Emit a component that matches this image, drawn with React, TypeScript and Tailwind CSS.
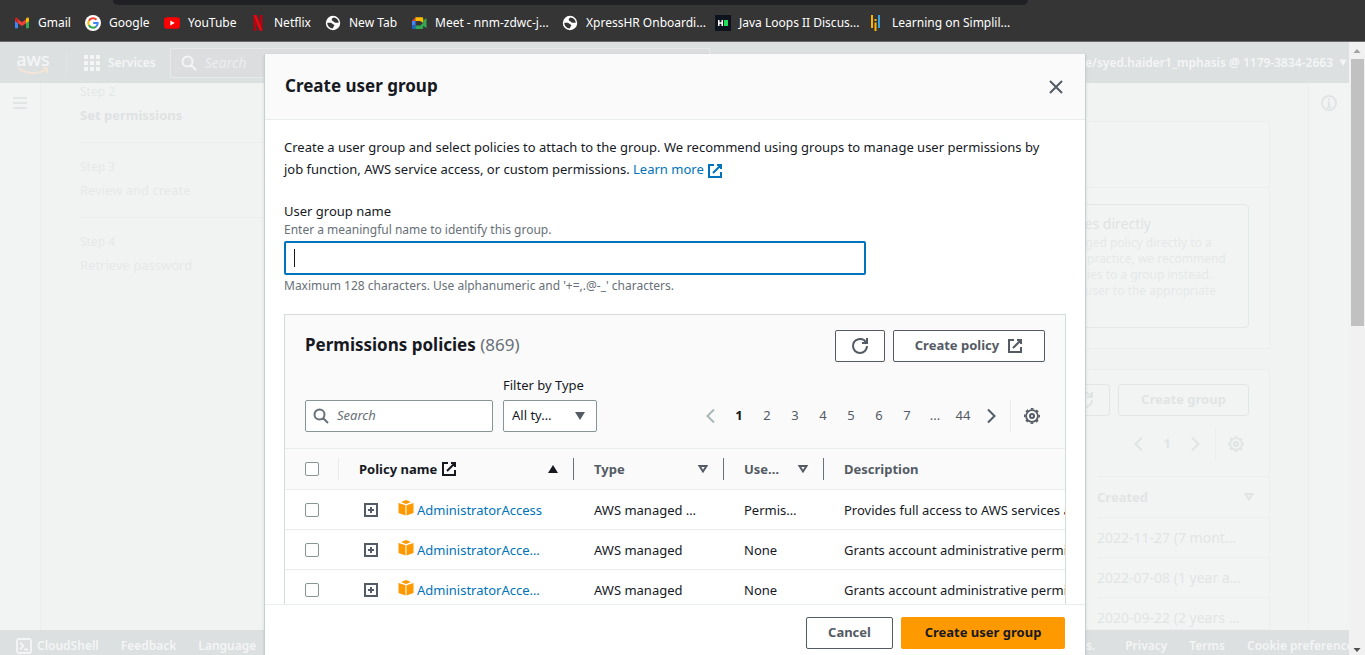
import type { ReactNode } from "react";

function Stroke({ d, className = "size-4", width = 2 }: { d: string; className?: string; width?: number }) {
  return (
    <svg viewBox="0 0 16 16" className={`shrink-0 ${className}`} fill="none" stroke="currentColor" strokeWidth={width} aria-hidden="true">
      <path d={d} />
    </svg>
  );
}

const EXTERNAL = "M10 2h4v4M6 10l8-8M14 9v5H2V2h5";
const REFRESH = "M10 5h5V0M15 8a7 7 0 0 1-14 0 7 7 0 0 1 13.3-3";
const LEFT = "M11 1.5L4.5 8l6.500 6.500";
const RIGHT = "M5 1.500L11.500 8 5 14.500";
const CLOSE = "M2 2l12 12M14 2L2 14";

function SearchIcon() {
  return <Stroke d="M11.500 6.500a5 5 0 1 1-10 0 5 5 0 0 1 10 0zM15 15l-5-5" />;
}

function Gear() {
  return (
    <svg viewBox="0 0 16 16" className="size-4 shrink-0" fill="none" stroke="currentColor" strokeWidth="2" aria-hidden="true">
      <circle cx="8" cy="8" r="5.900" strokeWidth="1.800" />
      <circle cx="8" cy="8" r="7.200" strokeWidth="1.600" strokeDasharray="2.800 2.850" strokeDashoffset="1.400" />
      <circle cx="8" cy="8" r="2" />
    </svg>
  );
}

function DownOutline() {
  return (
    <svg viewBox="0 0 16 16" className="size-4 shrink-0" fill="none" stroke="currentColor" strokeWidth="2" aria-hidden="true">
      <path d="M4.500 5h7L8 10.500z" />
    </svg>
  );
}

function Cube() {
  return (
    <svg viewBox="0 0 16 16" className="size-4 shrink-0" fill="#ff9900" aria-hidden="true">
      <path d="M8 0l5 2-5 2-5-2zM.5 3l7 2.300V15.500l-7-2.500zM15.500 3l-7 2.300V15.500l7-2.500z" />
    </svg>
  );
}

const gmail = (
  <svg viewBox="0 0 16 16" className="size-4">
    <path d="M1 4v9.200h3V7.500z" fill="#4285f4" />
    <path d="M15 4v9.200h-3V7.500z" fill="#34a853" />
    <path d="M4 4.300v4L8 11l4-2.700v-4L8 7.300z" fill="#ea4335" />
    <path d="M1 4c0-1.500 1.500-1.700 2.400-1L4 3.600v4.600L1 6z" fill="#c5221f" />
    <path d="M15 4c0-1.500-1.500-1.700-2.400-1l-.6.6v4.600L15 6z" fill="#fbbc04" />
  </svg>
);
const google = (
  <svg viewBox="0 0 16 16" className="size-4" fill="none" strokeWidth="2">
    <circle cx="8" cy="8" r="8" fill="#fff" />
    <path d="M11.500 4.700A4.700 4.700 0 0 0 3.900 5.800" stroke="#ea4335" />
    <path d="M3.900 5.700a4.700 4.700 0 0 0 0 4.700" stroke="#fbbc04" />
    <path d="M3.900 10.200a4.700 4.700 0 0 0 7.100 1.400" stroke="#34a853" />
    <path d="M8.200 8h4.500a4.700 4.700 0 0 1-1.700 3.700" stroke="#4285f4" />
  </svg>
);
const youtube = (
  <svg viewBox="0 0 16 16" className="size-4">
    <rect y="2.300" width="16" height="11.500" rx="3" fill="#f00" />
    <path d="M6.300 5.500v5L10.700 8z" fill="#fff" />
  </svg>
);
const netflix = (
  <svg viewBox="0 0 16 16" className="size-4">
    <path d="M3.500 0h3v15.500l-3 .5zM9.500 0h3v16l-3-.5z" fill="#b1060f" />
    <path d="M3.500 0h3l6 16-3-.5z" fill="#e50914" />
  </svg>
);
const globe = (
  <svg viewBox="0 0 16 16" className="size-4">
    <circle cx="8" cy="8" r="7.200" fill="#fff" />
    <path d="M2.300 7.700h3.200c1.700 0 1.500 1.500 3 1.700 1.200.2 1 1.500.2 2.200l-1 1.800C5 13.300 2.300 11 2.300 7.700z" fill="#353535" />
    <path d="M8.500 2.400c-2 .8-2.500 2.800-.8 3.500 1.300.5 1.500 1.800 3 1.800h3C13.700 5 11.500 2.500 8.500 2.400z" fill="#353535" />
  </svg>
);
const meet = (
  <svg viewBox="0 0 16 16" className="size-4">
    <path d="M1 6l3.500-3.700V6z" fill="#ea4335" />
    <path d="M4.500 2.300H11c.8 0 1.200.5 1.200 1.200V8l-3-2H4.500z" fill="#fbbc04" />
    <path d="M1 6h3.500v4.500H1z" fill="#4285f4" />
    <path d="M1 10.500h3.500V14H2.200C1.400 14 1 13.500 1 12.800z" fill="#1967d2" />
    <path d="M4.500 10.500h4.700L12.200 8v4.800c0 .7-.4 1.200-1.200 1.200H4.500zM12.200 5.500L15.500 3v10.300l-3.300-2.600z" fill="#34a853" />
  </svg>
);
const hackerrank = (
  <svg viewBox="0 0 16 16" className="size-4">
    <path d="M0 0h16v16H0z" fill="#0e141e" />
    <path d="M3 5h1.500v2.200h2V5H8v6H6.500V8.800h-2V11H3z" fill="#fff" />
    <path d="M9 5h4v6H9z" fill="#1ee05a" />
  </svg>
);
const simplilearn = (
  <svg viewBox="0 0 16 16" className="size-4">
    <path d="M3 0h2v13H3zM6.500 4h2v2h-2zM6.500 7.500h2V16h-2z" fill="#fdb300" />
    <path d="M10 0h2v13h-2z" fill="#38a4dd" />
  </svg>
);

const bookmarks: { icon: ReactNode; label: string; width: string }[] = [
  { icon: gmail, label: "Gmail", width: "w-[71px]" },
  { icon: google, label: "Google", width: "w-[79px]" },
  { icon: youtube, label: "YouTube", width: "w-[86px]" },
  { icon: netflix, label: "Netflix", width: "w-[75px]" },
  { icon: globe, label: "New Tab", width: "w-[86px]" },
  { icon: meet, label: "Meet - nnm-zdwc-j...", width: "w-[151px]" },
  { icon: globe, label: "XpressHR Onboardi...", width: "w-[153px]" },
  { icon: hackerrank, label: "Java Loops II Discus...", width: "w-[153px]" },
  { icon: simplilearn, label: "Learning on Simplil...", width: "w-[153px]" },
];

function BookmarkBar() {
  return (
    <header className="flex h-[42px] shrink-0 flex-col border-b border-[#6a6a6a] bg-[#353535]">
      <div className="mr-[337px] ml-[113px] h-[5px] rounded-b-lg bg-[#202124]" />
      <nav className="flex flex-1 items-center pl-[14px] text-xs text-white" aria-label="Bookmarks">
        {bookmarks.map((b) => (
          <a key={b.label} href="#" className={`flex shrink-0 items-center gap-2 whitespace-nowrap ${b.width}`}>
            {b.icon}
            {b.label}
          </a>
        ))}
      </nav>
    </header>
  );
}

function ConsoleHeader() {
  return (
    <header className="flex h-[41px] shrink-0 items-center bg-[#dce0e1] text-xs font-semibold text-[#f4f5f5]">
      <a href="#" className="flex w-[67px] flex-col items-center border-r border-[#e1e4e5] text-lg leading-4 font-medium">
        aws
        <svg viewBox="0 0 32 8" className="h-2 w-8" fill="none" stroke="#f3e6d6" strokeWidth="2">
          <path d="M1 1c9 6.500 20 6.500 28 1.500M25.500 1.200c5-1 5.500 0 4 5" />
        </svg>
      </a>
      <button className="ml-[17px] flex items-center gap-2">
        <svg viewBox="0 0 16 16" className="size-4" fill="currentColor">
          <path d="M0 0h4v4H0zM6 0h4v4H6zM12 0h4v4h-4zM0 6h4v4H0zM6 6h4v4H6zM12 6h4v4h-4zM0 12h4v4H0zM6 12h4v4H6zM12 12h4v4h-4z" />
        </svg>
        Services
      </button>
      <div className="ml-[14px] flex h-[30px] w-[540px] items-center gap-2 border border-[#e7eaea] bg-[#dcdddf] pl-[10px]">
        <SearchIcon />
        <input aria-label="Search services" placeholder="Search" className="min-w-0 flex-1 text-sm font-normal italic placeholder:text-[#eceeee]" />
      </div>
      <button className="ml-auto flex items-center gap-1 whitespace-nowrap">
        Role/syed.haider1_mphasis @ 1179-3834-2663
        <svg viewBox="0 0 12 12" className="size-3" fill="currentColor">
          <path d="M2.500 2.500h7L6 9z" />
        </svg>
      </button>
    </header>
  );
}

const steps = [
  { step: "Step 2", title: "Set permissions", style: "font-bold text-[#dfe2e2]" },
  { step: "Step 3", title: "Review and create", style: "text-[#e5e8e8]" },
  { step: "Step 4", title: "Retrieve password", style: "text-[#e5e8e8]" },
];

const createdDates = ["2022-11-27 (7 mont…", "2022-07-08 (1 year a…", "2020-09-22 (2 years …"];

function ConsolePage() {
  return (
    <div className="flex min-w-0 flex-1 flex-col overflow-hidden bg-[#f2f4f4]">
      <ConsoleHeader />
      <div className="flex min-h-0 flex-1 overflow-hidden">
        <aside className="flex w-[41px] shrink-0 justify-center border-r border-[#eceeee] pt-3 text-[#e2e5e5]">
          <button aria-label="Open navigation" className="h-4">
            <Stroke d="M1 3h14M1 8h14M1 13h14" />
          </button>
        </aside>
        <main className="flex min-w-0 flex-1 gap-10 bg-[#f1f3f3] pr-[38px] pl-[39px]">
          <ol className="flex w-[222px] shrink-0 flex-col">
            {steps.map((s) => (
              <li key={s.step} className="mb-[15px] flex h-[60px] flex-col border-b border-[#eceeee] last:border-0">
                <span className="text-xs leading-[18px] text-[#e5e8e8]">{s.step}</span>
                <span className={`pt-[3px] text-[13px] leading-[22px] ${s.style}`}>{s.title}</span>
              </li>
            ))}
          </ol>
          <div className="flex min-w-0 flex-1 flex-col pt-[38px]">
            <section className="shrink-0 border border-[#eceeee] bg-[#f2f4f4]">
              <div className="h-[66px] border-b border-[#eceeee]" />
              <div className="flex justify-end px-5 pt-4 pb-5">
                <div className="h-[124px] w-[278px] rounded-sm border border-[#e5e8e8] pt-2 pl-8 whitespace-nowrap">
                  <h3 className="text-sm leading-[22px] text-[#dfe2e2]">Attach policies directly</h3>
                  <p className="text-xs leading-4 text-[#e5e8e8]">
                    Attach a managed policy directly to a<br />
                    user. As a best practice, we recommend<br />
                    attaching policies to a group instead.<br />
                    Then, add the user to the appropriate<br />
                    group.
                  </p>
                </div>
              </div>
            </section>
            <section className="mt-5 flex-1 overflow-hidden border border-[#eceeee] bg-[#f2f4f4] text-[#e1e4e4]">
              <div className="flex justify-end gap-2 pt-[14px] pr-5">
                <button aria-label="Refresh groups" className="flex h-8 w-[50px] items-center justify-center rounded-sm border border-[#e2e5e5]">
                  <Stroke d={REFRESH} />
                </button>
                <button className="h-8 w-[131px] rounded-sm border border-[#e2e5e5] text-[13px] font-bold">Create group</button>
              </div>
              <div className="mt-3 flex h-8 items-center justify-end gap-3 pr-[25px]">
                <Stroke d={LEFT} />
                <span className="w-4 text-center text-[13px] font-bold">1</span>
                <Stroke d={RIGHT} />
                <span className="h-8 border-r border-[#eceeee]" />
                <Gear />
              </div>
              <table className="mt-4 ml-auto w-[172px] text-left text-sm">
                <thead>
                  <tr className="h-[41px] border-y border-[#eceeee] text-[13px]">
                    <th>
                      <span className="flex items-center justify-between pr-3">Created <DownOutline /></span>
                    </th>
                  </tr>
                </thead>
                <tbody>
                  {createdDates.map((d) => (
                    <tr key={d} className="h-10 border-b border-[#eceeee]">
                      <td className="whitespace-nowrap">{d}</td>
                    </tr>
                  ))}
                </tbody>
              </table>
            </section>
          </div>
        </main>
        <aside className="flex w-[41px] shrink-0 justify-center border-l border-[#eceeee] pt-3 text-[#e1e4e4]">
          <svg viewBox="0 0 16 16" className="size-4" fill="none" stroke="currentColor" strokeWidth="2">
            <circle cx="8" cy="8" r="7" />
            <path d="M8 3.500v2M6.500 7.500H8v4M6 12h4" />
          </svg>
        </aside>
      </div>
      <footer className="flex h-[25px] shrink-0 gap-[22px] overflow-hidden bg-[#dce0e1] pt-2 pl-4 text-xs leading-4 font-semibold whitespace-nowrap text-[#f4f5f5]">
        <a href="#" className="flex gap-[5px]">
          <svg viewBox="0 0 16 16" className="size-4" fill="none" stroke="currentColor" strokeWidth="1.800">
            <rect x="1" y="1" width="14" height="14" rx="2" />
            <path d="M4 4.500L7.500 8 4 11.500M8 11.500h4" />
          </svg>
          CloudShell
        </a>
        <a href="#">Feedback</a>
        <a href="#">Language</a>
        <span className="ml-auto pr-2">Amazon Web Services, Inc. or its affiliates.</span>
        <a href="#">Privacy</a>
        <a href="#">Terms</a>
        <a href="#" className="w-[102px]">Cookie preferences</a>
      </footer>
    </div>
  );
}

function Scrollbar() {
  return (
    <div className="flex w-4 shrink-0 flex-col items-center bg-[#f1f1f1]" aria-hidden="true">
      <svg viewBox="0 0 16 16" className="size-4" fill="#a3a3a3"><path d="M4.500 11L8 7l3.500 4z" /></svg>
      <div className="mt-px h-[267px] w-[13px] bg-[#c1c1c1]" />
      <svg viewBox="0 0 16 16" className="mt-auto size-4" fill="#505050"><path d="M4.500 9L8 13l3.500-4z" /></svg>
    </div>
  );
}

const policies = [
  { name: "AdministratorAccess", type: "AWS managed …", used: "Permis…", description: "Provides full access to AWS services and resources." },
  { name: "AdministratorAcce…", type: "AWS managed", used: "None", description: "Grants account administrative permissions while explicitly allowing direct access." },
  { name: "AdministratorAcce…", type: "AWS managed", used: "None", description: "Grants account administrative permissions. Explicitly allows developers access." },
];

const pages = ["2", "3", "4", "5", "6", "7", "...", "44"];

function Checkbox({ label }: { label: string }) {
  return <input type="checkbox" aria-label={label} className="block size-[14px] appearance-none rounded-xs border border-[#879596] bg-white" />;
}

function PoliciesTable() {
  return (
    <table className="w-[900px] table-fixed text-left text-[13px] leading-[22px]">
      <colgroup>
        <col className="w-[53px]" />
        <col className="w-[235px]" />
        <col className="w-[150px]" />
        <col className="w-[100px]" />
        <col />
      </colgroup>
      <thead className="bg-[#fafafa] text-[#545b64]">
        <tr className="h-[41px] border-y border-[#eaeded]">
          <th className="pl-5"><Checkbox label="Select all policies" /></th>
          <th className="p-0 text-[#16191f]">
            <div className="flex h-[22px] items-center border-l border-[#eaeded] pl-5">
              Policy name
              <Stroke d={EXTERNAL} className="ml-1 size-4" />
              <svg viewBox="0 0 16 16" className="mr-3 ml-auto size-4" fill="currentColor"><path d="M3 12h10L8 4z" /></svg>
            </div>
          </th>
          <th className="p-0">
            <div className="flex h-[22px] items-center justify-between border-l border-[#687078] pr-3 pl-5">Type <DownOutline /></div>
          </th>
          <th className="p-0">
            <div className="flex h-[22px] items-center justify-between border-l border-[#687078] pr-3 pl-5">Use… <DownOutline /></div>
          </th>
          <th className="p-0">
            <div className="flex h-[22px] items-center border-l border-[#687078] pl-5">Description</div>
          </th>
        </tr>
      </thead>
      <tbody className="text-[#16191f]">
        {policies.map((p, i) => (
          <tr key={i} className="h-10 border-b border-[#eaeded]">
            <td className="pl-5"><Checkbox label={`Select ${p.name}`} /></td>
            <td className="p-0">
              <div className="flex items-center pl-[25px] whitespace-nowrap">
                <button aria-label={`Expand ${p.name}`} className="text-[#545b64]">
                  <Stroke d="M2 2h12v12H2zM8 5v6M5 8h6" className="block size-4" />
                </button>
                <a href="#" className="ml-[19px] flex items-center gap-[3px] text-[#0073bb]">
                  <span className="pb-1"><Cube /></span>
                  {p.name}
                </a>
              </div>
            </td>
            <td className="pl-[21px] whitespace-nowrap">{p.type}</td>
            <td className="pl-[21px] whitespace-nowrap">{p.used}</td>
            <td className="pl-[21px] whitespace-nowrap">{p.description}</td>
          </tr>
        ))}
      </tbody>
    </table>
  );
}

function PermissionsPolicies() {
  return (
    <section className="mt-5 overflow-hidden border border-[#d5dbdb] bg-white">
      <div className="bg-[#fafafa] px-5 pt-[15px] pb-4">
        <div className="flex items-center gap-2">
          <h3 className="flex-1 pb-0.5 text-[17px] leading-[22px] font-bold text-[#16191f]">
            Permissions policies <span className="font-normal text-[#687078]">(869)</span>
          </h3>
          <button aria-label="Refresh policies" className="flex h-8 w-[50px] items-center justify-center rounded-xs border border-[#545b64] bg-white text-[#545b64]">
            <Stroke d={REFRESH} />
          </button>
          <button className="flex h-8 w-[152px] items-center justify-center gap-2 rounded-xs border border-[#545b64] bg-white text-[13px] font-bold text-[#545b64]">
            Create policy
            <Stroke d={EXTERNAL} />
          </button>
        </div>
        <div className="mt-3 flex items-end text-[13px]">
          <div className="flex h-8 w-[188px] items-center gap-2 rounded-xs border border-[#879596] bg-white pl-[7px] text-[#687078]">
            <SearchIcon />
            <input aria-label="Search policies" placeholder="Search" className="min-w-0 flex-1 italic outline-none placeholder:text-[#687078]" />
          </div>
          <div className="ml-[10px] flex flex-col gap-1">
            <label htmlFor="type-filter" className="leading-[22px] text-[#16191f]">Filter by Type</label>
            <div className="flex h-8 w-[94px] items-center rounded-xs border border-[#879596] bg-white pr-2">
              <select id="type-filter" className="min-w-0 flex-1 appearance-none pl-2 text-[#16191f] outline-none">
                <option>All ty…</option>
              </select>
              <svg viewBox="0 0 16 16" className="size-4 shrink-0" fill="#545b64"><path d="M3 4h10L8 12z" /></svg>
            </div>
          </div>
          <nav className="ml-auto flex h-8 items-center text-[#545b64]" aria-label="Pagination">
            <button aria-label="Previous page" className="w-7 text-[#aab7b8]"><Stroke d={LEFT} className="mx-auto size-4" /></button>
            <button className="w-7 font-bold text-[#16191f]">1</button>
            {pages.map((p) => (
              <button key={p} className="w-7">{p}</button>
            ))}
            <button aria-label="Next page" className="w-7"><Stroke d={RIGHT} className="mx-auto size-4" /></button>
            <span className="ml-[5px] h-8 border-r border-[#eaeded]" />
            <button aria-label="Preferences" className="pr-[5px] pl-[13px]"><Gear /></button>
          </nav>
        </div>
      </div>
      <PoliciesTable />
    </section>
  );
}

function CreateGroupDialog() {
  return (
    <div role="dialog" aria-labelledby="dialog-title" className="flex w-[822px] flex-col border-x border-[#c6cfd1] bg-white text-[13px] text-[#16191f] shadow-sm">
      <div className="flex h-[66px] shrink-0 items-center justify-between border-b border-[#eaeded] bg-[#fafafa] pr-[21px] pl-5">
        <h2 id="dialog-title" className="pb-0.5 text-[17px] leading-[22px] font-bold">Create user group</h2>
        <button aria-label="Close" className="text-[#545b64]"><Stroke d={CLOSE} /></button>
      </div>
      <div className="min-h-0 flex-1 overflow-hidden px-[19px] pt-4">
        <p className="leading-[22px]">
          Create a user group and select policies to attach to the group. We recommend using groups to manage user permissions by
          <br />
          job function, AWS service access, or custom permissions.{" "}
          <a href="#" className="text-[#0073bb]">
            Learn more <Stroke d={EXTERNAL} className="inline size-4" />
          </a>
        </p>
        <label htmlFor="group-name" className="mt-5 block leading-[22px]">User group name</label>
        <p className="text-xs leading-4 text-[#687078]">Enter a meaningful name to identify this group.</p>
        <div className="relative mt-[3px] w-[582px] max-w-full">
          <input id="group-name" className="block h-[34px] w-full rounded-xs border-2 border-[#0073bb] px-2 caret-transparent outline-none" />
          <span className="absolute top-2 left-[10px] h-[18px] w-px bg-[#16191f]" />
        </div>
        <p className="mt-[3px] text-xs leading-4 text-[#687078]">Maximum 128 characters. Use alphanumeric and '+=,.@-_' characters.</p>
        <PermissionsPolicies />
      </div>
      <div className="flex shrink-0 justify-end gap-2 border-t border-[#eaeded] bg-white pt-3 pr-5 pb-[6px]">
        <button className="h-8 w-[87px] rounded-xs border border-[#545b64] font-bold text-[#545b64]">Cancel</button>
        <button className="h-8 w-[164px] rounded-xs bg-[#ff9900] font-bold">Create user group</button>
      </div>
    </div>
  );
}

export default function App() {
  return (
    <div className='flex h-screen flex-col overflow-hidden font-["Noto_Sans","Open_Sans",sans-serif]'>
      <BookmarkBar />
      <div className="relative flex min-h-0 flex-1">
        <ConsolePage />
        <Scrollbar />
        <div className="absolute inset-0 flex justify-center overflow-hidden pt-3 pr-[15px]">
          <CreateGroupDialog />
        </div>
      </div>
    </div>
  );
}
